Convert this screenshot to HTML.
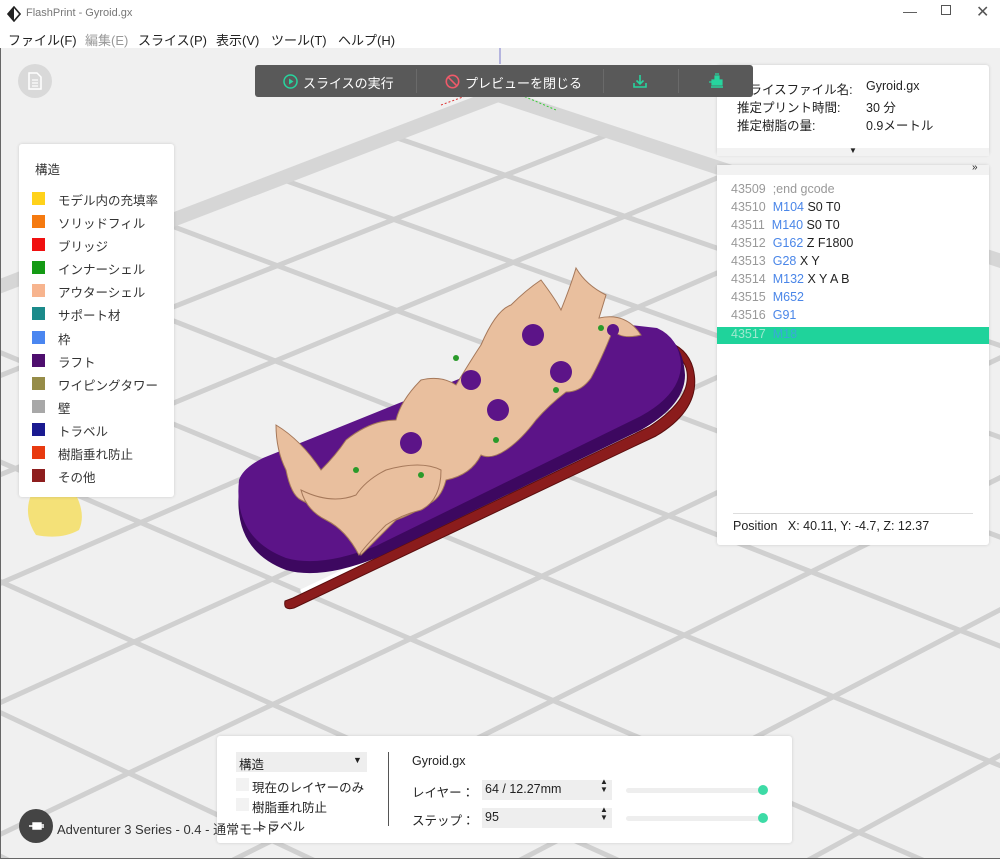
<!DOCTYPE html>
<html><head><meta charset="utf-8">
<style>
*{margin:0;padding:0;box-sizing:border-box}
html,body{width:1000px;height:859px;overflow:hidden}
body{background:#fff;font-family:"Liberation Sans","Noto Sans CJK JP",sans-serif;font-size:13px;color:#222;position:relative}
.abs{position:absolute}
#title{left:0;top:0;width:1000px;height:30px;background:#fff}
#menu{left:0;top:30px;width:1000px;height:18px;background:#fff;font-size:13px}
#menu span{position:absolute;top:0}
#view{left:0;top:48px;width:1000px;height:811px;background:#f0f0f0;overflow:hidden;border-left:1px solid #666;border-bottom:1px solid #666}
.panel{position:absolute;background:#fff;border-radius:3px;box-shadow:0 0 3px rgba(0,0,0,.15)}
.leg div{position:absolute;left:39px;font-size:12.5px;color:#333}
.leg i{position:absolute;left:-26px;top:2px;width:13px;height:13px}
.gc div{position:absolute;left:14px;font-size:12.5px;color:#222;white-space:pre}
.gc .n{color:#999}.gc .b{color:#4a86e8}
</style></head><body>
<div id="title" class="abs">
<svg class="abs" style="left:7px;top:6px" width="14" height="16" viewBox="0 0 14 16"><path d="M7 1 L13 8 L7 15 L1 8 Z" fill="none" stroke="#222" stroke-width="1.6"/><path d="M7 1 L1 8 L7 15 Z" fill="#222"/></svg>
<span class="abs" style="left:26px;top:7px;font-size:11px;color:#777">FlashPrint - Gyroid.gx</span>
<span class="abs" style="left:903px;top:3px;font-size:14px;color:#555">—</span>
<span class="abs" style="left:941px;top:5px;width:10px;height:10px;border:1px solid #555"></span>
<span class="abs" style="left:976px;top:2px;font-size:16px;color:#555">✕</span>
</div>
<div id="menu" class="abs">
<span style="left:8px">ファイル(F)</span><span style="left:85px;color:#999">編集(E)</span><span style="left:138px">スライス(P)</span><span style="left:216px">表示(V)</span><span style="left:271px">ツール(T)</span><span style="left:338px">ヘルプ(H)</span>
</div>
<div id="view" class="abs">
<svg id="grid" class="abs" style="left:0;top:0" width="1000" height="811"></svg>
<svg class="abs" style="left:0;top:0" width="1000" height="811" viewBox="0 48 1000 811">
<line x1="499" y1="48" x2="499" y2="64" stroke="#7777cc" stroke-width="1"/>
<line x1="440" y1="105" x2="470" y2="94" stroke="#d33" stroke-width="1" stroke-dasharray="2 2"/>
<line x1="520" y1="95" x2="555" y2="110" stroke="#3c3" stroke-width="1" stroke-dasharray="2 2"/>
<g transform="translate(0,4)">
<path d="M300 588 L655 420 Q695 398 690 365" fill="none" stroke="#fff" stroke-width="5"/>
<path d="M284 597 Q282 607 293 604 L655 432 Q702 404 692 364 Q686 343 664 337 L661 343 Q684 352 686 368 Q690 396 648 423 L292 594 Z" fill="#8b1c1c" stroke="#5a0e0e" stroke-width="1"/>
</g>
<g transform="translate(0,-10)">
<path d="M238 500 Q232 560 285 580 Q320 590 375 568 L640 440 Q684 415 684 385 Q682 352 660 343 L620 340 Q560 352 500 378 L262 478 Q242 488 238 500Z" fill="#3d0860"/>
<path d="M238 490 Q232 548 285 568 Q320 578 375 556 L640 426 Q680 404 680 374 Q678 348 656 338 L620 334 Q560 347 500 372 L262 468 Q242 478 238 490Z" fill="#5c1488"/>
</g>
<g fill="#e9bf9e" stroke="#a5785a" stroke-width="1">
<path d="M275 425 Q300 440 320 470 Q335 455 345 440 Q370 420 395 420 Q400 400 420 380 Q440 375 455 385 Q470 360 480 345 Q495 310 510 305 Q525 290 540 280 Q555 300 560 310 Q570 285 575 268 Q585 285 605 295 L598 318 Q625 312 640 335 Q620 340 612 330 Q600 360 590 378 Q580 392 565 392 Q548 405 535 420 Q520 440 505 450 Q490 460 480 455 Q470 475 445 480 Q440 500 425 505 Q410 515 395 520 Q375 540 360 555 Q355 530 335 520 Q320 510 300 500 Q290 495 285 470 Q275 450 275 425Z"/>
<path d="M300 490 Q330 505 355 495 Q365 480 385 470 Q420 460 440 470 Q440 500 420 510 Q400 515 385 525 Q365 545 358 555 Q345 530 325 520 Q305 510 300 490Z"/>
</g>
<g fill="#5c1488"><circle cx="532" cy="335" r="11"/><circle cx="560" cy="372" r="11"/><circle cx="470" cy="380" r="10"/><circle cx="497" cy="410" r="11"/><circle cx="410" cy="443" r="11"/><circle cx="612" cy="330" r="6"/></g>
<g fill="#2a9a2a"><circle cx="455" cy="358" r="3"/><circle cx="600" cy="328" r="3"/><circle cx="495" cy="440" r="3"/><circle cx="420" cy="475" r="3"/><circle cx="355" cy="470" r="3"/><circle cx="555" cy="390" r="3"/></g>
<path d="M30 495 Q50 485 75 495 Q85 515 78 530 Q60 540 35 535 Q22 515 30 495Z" fill="#f5dc50" opacity="0.75"/>
</svg>
<div class="abs" style="left:17px;top:16px;width:34px;height:34px;border-radius:50%;background:#d9d9d9"></div>
<svg class="abs" style="left:26px;top:24px" width="16" height="18"><path d="M2 1h8l4 4v12H2z" fill="none" stroke="#fff" stroke-width="1.5"/><path d="M5 8h6M5 11h6M5 14h6" stroke="#fff" stroke-width="1.3"/></svg>
<div class="panel" style="left:716px;top:17px;width:272px;height:90px;font-size:12.5px">
<span class="abs" style="left:20px;top:14px">スライスファイル名:</span><span class="abs" style="left:149px;top:14px">Gyroid.gx</span>
<span class="abs" style="left:20px;top:32px">推定プリント時間:</span><span class="abs" style="left:149px;top:32px">30 分</span>
<span class="abs" style="left:20px;top:50px">推定樹脂の量:</span><span class="abs" style="left:149px;top:50px">0.9メートル</span>
<div class="abs" style="left:0;top:83px;width:272px;height:8px;background:#f2f2f2"></div>
<span class="abs" style="left:132px;top:81px;font-size:8px">▼</span>
</div>
<div class="abs" style="left:254px;top:17px;width:498px;height:32px;background:#595959;border-radius:3px;color:#fff;font-size:13px;z-index:5">
<svg class="abs" style="left:28px;top:9px" width="15" height="15"><circle cx="7.5" cy="7.5" r="6.5" fill="none" stroke="#27d59e" stroke-width="1.5"/><path d="M6 4.5v6l4.5-3z" fill="#27d59e"/></svg>
<span class="abs" style="left:48px;top:8px">スライスの実行</span>
<div class="abs" style="left:161px;top:4px;width:1px;height:24px;background:#6a6a6a"></div>
<svg class="abs" style="left:190px;top:9px" width="15" height="15"><circle cx="7.5" cy="7.5" r="6.2" fill="none" stroke="#f05a6a" stroke-width="1.6"/><path d="M3.2 3.2l8.6 8.6" stroke="#f05a6a" stroke-width="1.6"/></svg>
<span class="abs" style="left:210px;top:8px">プレビューを閉じる</span>
<div class="abs" style="left:348px;top:4px;width:1px;height:24px;background:#6a6a6a"></div>
<svg class="abs" style="left:377px;top:8px" width="16" height="16"><path d="M8 2v9M4.5 7.5L8 11l3.5-3.5M2 10v4h12v-4" fill="none" stroke="#27d59e" stroke-width="1.6"/></svg>
<div class="abs" style="left:423px;top:4px;width:1px;height:24px;background:#6a6a6a"></div>
<svg class="abs" style="left:453px;top:7px" width="18" height="18"><path d="M4 8h10v5H4zM7 8V4h4v4M1 10h3M7 2h4" fill="#27d59e" stroke="#27d59e" stroke-width="1.2"/><path d="M3 15h12" stroke="#27d59e" stroke-width="1.5"/></svg>
</div>
<div class="panel gc" style="left:716px;top:117px;width:272px;height:380px">
<div style="left:0;top:0;width:272px;height:10px;background:#f2f2f2"></div>
<span class="abs" style="left:255px;top:-3px;font-size:10px">»</span>
<div style="top:17px"><span class="n">43509  ;end gcode</span></div>
<div style="top:35px"><span class="n">43510  </span><span class="b">M104</span> S0 T0</div>
<div style="top:53px"><span class="n">43511  </span><span class="b">M140</span> S0 T0</div>
<div style="top:71px"><span class="n">43512  </span><span class="b">G162</span> Z F1800</div>
<div style="top:89px"><span class="n">43513  </span><span class="b">G28</span> X Y</div>
<div style="top:107px"><span class="n">43514  </span><span class="b">M132</span> X Y A B</div>
<div style="top:125px"><span class="n">43515  </span><span class="b">M652</span></div>
<div style="top:143px"><span class="n">43516  </span><span class="b">G91</span></div>
<div style="left:0;top:162px;width:272px;height:17px;background:#1fd39b"></div>
<div style="top:162px"><span style="color:#9fe8cf">43517  </span><span style="color:#3aa8d8">M18</span></div>
<div style="left:16px;top:348px;width:240px;height:1px;background:#ddd"></div>
<div style="left:16px;top:354px">Position   X: 40.11, Y: -4.7, Z: 12.37</div>
</div>
<div class="panel leg" style="left:18px;top:96px;width:155px;height:353px">
<div style="left:16px;top:15px">構造</div>
<div style="top:46px"><i style="background:#ffd21a"></i>モデル内の充填率</div>
<div style="top:69px"><i style="background:#f57a10"></i>ソリッドフィル</div>
<div style="top:92px"><i style="background:#f01010"></i>ブリッジ</div>
<div style="top:115px"><i style="background:#149a14"></i>インナーシェル</div>
<div style="top:138px"><i style="background:#f7b48e"></i>アウターシェル</div>
<div style="top:161px"><i style="background:#1b8a8a"></i>サポート材</div>
<div style="top:185px"><i style="background:#4a86f0"></i>枠</div>
<div style="top:208px"><i style="background:#4e0e6e"></i>ラフト</div>
<div style="top:231px"><i style="background:#968c48"></i>ワイピングタワー</div>
<div style="top:254px"><i style="background:#a8a8a8"></i>壁</div>
<div style="top:277px"><i style="background:#1a1a90"></i>トラベル</div>
<div style="top:300px"><i style="background:#e83a10"></i>樹脂垂れ防止</div>
<div style="top:323px"><i style="background:#8e1e1e"></i>その他</div>
</div>
<div class="panel" style="left:216px;top:688px;width:575px;height:107px;font-size:12.5px">
<div class="abs" style="left:19px;top:16px;width:131px;height:20px;background:#eee"></div>
<span class="abs" style="left:22px;top:18px">構造</span><span class="abs" style="left:136px;top:19px;font-size:9px">▼</span>
<div class="abs" style="left:19px;top:42px;width:13px;height:13px;background:#f2f2f2"></div><span class="abs" style="left:35px;top:41px">現在のレイヤーのみ</span>
<div class="abs" style="left:19px;top:62px;width:13px;height:13px;background:#f2f2f2"></div><span class="abs" style="left:35px;top:61px">樹脂垂れ防止</span>
<span class="abs" style="left:38px;top:80px">トラベル</span>
<div class="abs" style="left:171px;top:16px;width:1px;height:74px;background:#555"></div>
<span class="abs" style="left:195px;top:18px">Gyroid.gx</span>
<span class="abs" style="left:195px;top:46px">レイヤー：</span>
<div class="abs" style="left:265px;top:44px;width:130px;height:20px;background:#eee"></div><span class="abs" style="left:268px;top:46px">64 / 12.27mm</span><span class="abs" style="left:383px;top:42px;font-size:8px;line-height:8px">▲<br>▼</span>
<div class="abs" style="left:409px;top:52px;width:137px;height:5px;background:#eee;border-radius:3px"></div><div class="abs" style="left:541px;top:49px;width:10px;height:10px;border-radius:50%;background:#3ddba6"></div>
<span class="abs" style="left:195px;top:74px">ステップ：</span>
<div class="abs" style="left:265px;top:72px;width:130px;height:20px;background:#eee"></div><span class="abs" style="left:268px;top:74px">95</span><span class="abs" style="left:383px;top:70px;font-size:8px;line-height:8px">▲<br>▼</span>
<div class="abs" style="left:409px;top:80px;width:137px;height:5px;background:#eee;border-radius:3px"></div><div class="abs" style="left:541px;top:77px;width:10px;height:10px;border-radius:50%;background:#3ddba6"></div>
</div>
<div class="abs" style="left:18px;top:761px;width:34px;height:34px;border-radius:50%;background:#444"></div>
<svg class="abs" style="left:26px;top:769px" width="18" height="18"><path d="M6 6h8v6H6zM14 8h3M14 10h3M2 9h4" stroke="#fff" fill="#fff" stroke-width="1.4"/></svg>
<span class="abs" style="left:56px;top:771px;font-size:13px;color:#333">Adventurer 3 Series - 0.4 - 通常モード</span>
</div>
<script>
(function(){
var s=document.getElementById('grid'),ns='http://www.w3.org/2000/svg';
var cx=497,cy=47,ax=-105,ay=40,bx=112,by=37,k=0.02;
function P(u,v){var w=1-k*(u+v);if(w<0.1)w=0.1;return[cx+(u*ax+v*bx)/w,cy+(u*ay+v*by)/w];}
function L(p,q,w,c){var l=document.createElementNS(ns,'line');l.setAttribute('x1',p[0]);l.setAttribute('y1',p[1]);l.setAttribute('x2',q[0]);l.setAttribute('y2',q[1]);l.setAttribute('stroke',c||'#d0d0d0');l.setAttribute('stroke-width',w);s.appendChild(l);}
for(var i=1;i<=30;i++){L(P(i,0),P(i,40),5);L(P(0,i),P(40,i),5);}
L([cx,cy],[-200,cy+0.384*(cx+200)],14,'#d6d6d6');L([cx,cy],[1100,cy+0.33*(1100-cx)],14,'#d6d6d6');
})();
</script>
</body></html>
